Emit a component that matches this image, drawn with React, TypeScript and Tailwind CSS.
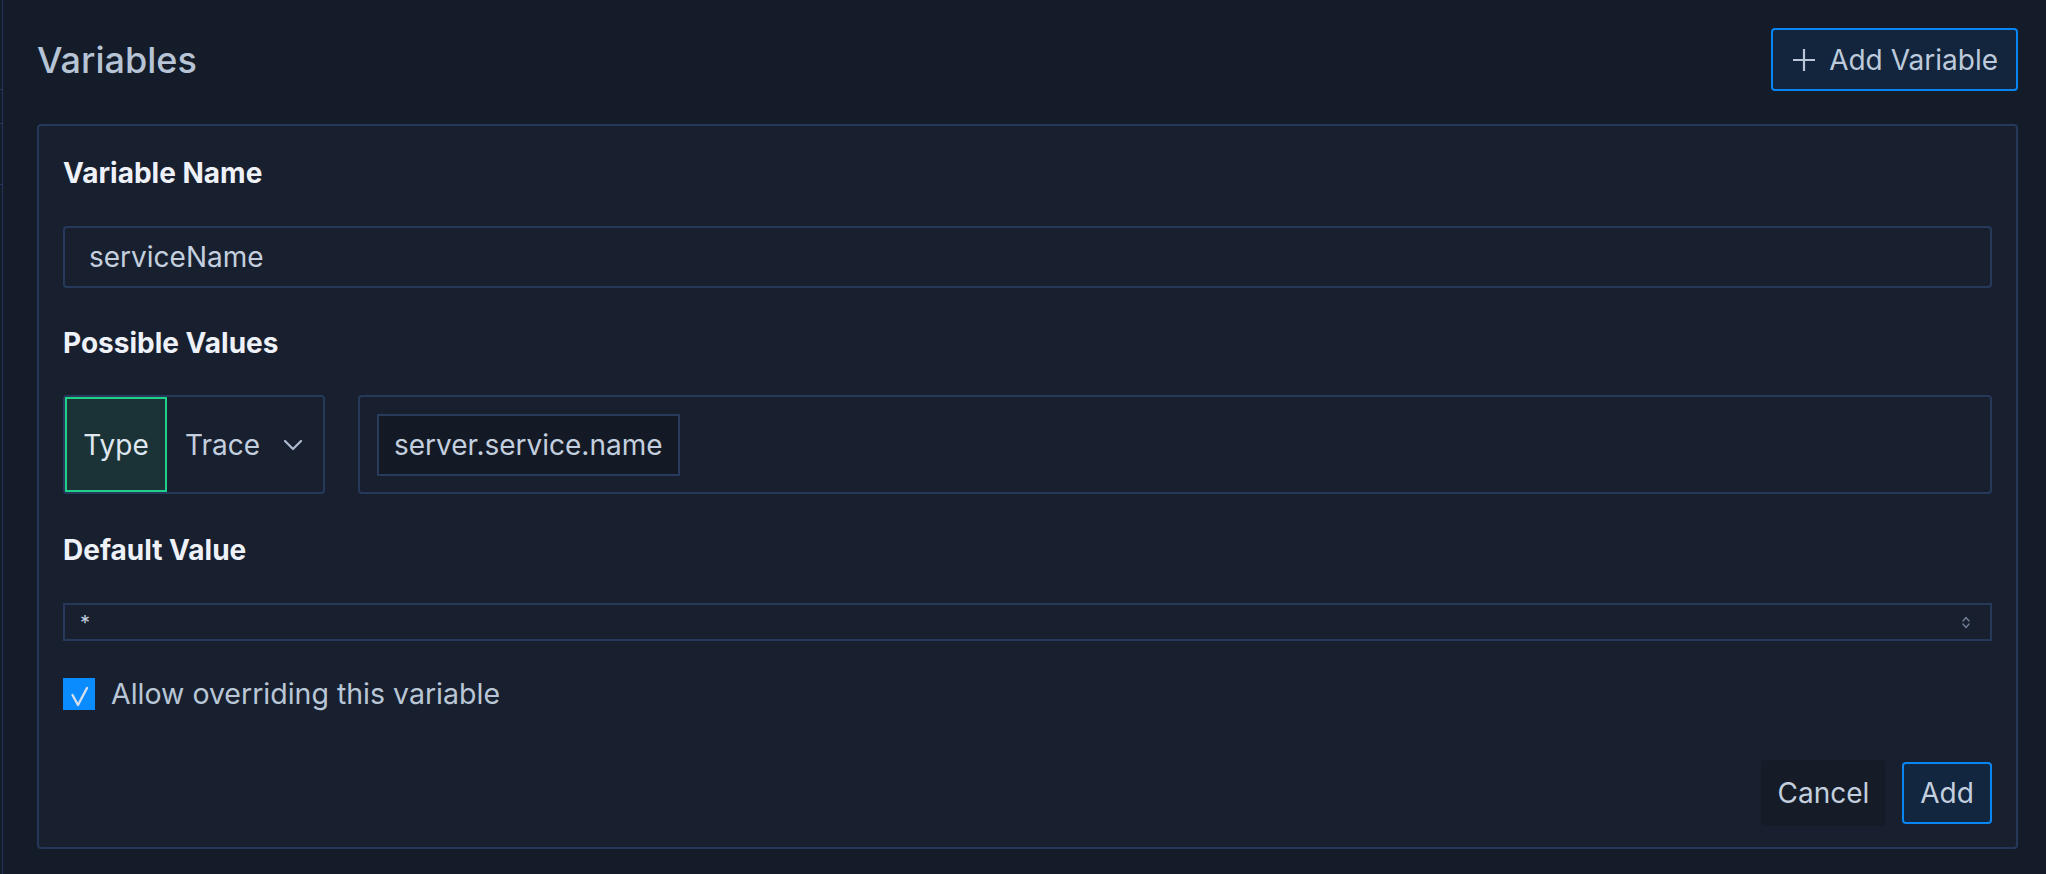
import React from "react"

function PlusIcon() {
  return (
    <svg width="22" height="22" viewBox="0 0 22 22" fill="none" stroke="#b8c6d8" strokeWidth="2.2" strokeLinecap="butt">
      <path d="M11 0v22M0 11h22" />
    </svg>
  )
}

function ChevronDown() {
  return (
    <svg width="20" height="12" viewBox="0 0 20 12" fill="none" stroke="#aebbd0" strokeWidth="2.2" strokeLinecap="round" strokeLinejoin="round">
      <path d="M2 2l8 8 8-8" />
    </svg>
  )
}

function UpDown() {
  return (
    <svg width="8" height="13" viewBox="0 0 8 13" fill="none" stroke="#6d7d95" strokeWidth="1.4" strokeLinecap="round" strokeLinejoin="round">
      <path d="M1 5l3-3.5L7 5M1 8l3 3.5L7 8" />
    </svg>
  )
}

function CheckIcon() {
  return (
    <svg width="32" height="32" viewBox="0 0 32 32" fill="none" stroke="#d2deec" strokeWidth="2.4" strokeLinecap="round" strokeLinejoin="round">
      <path d="M9.5 17l5.5 10 9-17" />
    </svg>
  )
}

export default function App() {
  return (
    <div className="flex h-[874px] w-[2046px] bg-[#151c29] [font-family:Inter,'Liberation_Sans',sans-serif] text-[#c3cfde]">
      {/* sidebar edge */}
      <div className="flex w-[3px] flex-col border-r border-[#23365a]">
        <div className="h-[90px] border-b border-[#23365a]" />
        <div className="h-[34px] border-b border-[#23365a]" />
        <div className="h-[61px] border-b border-[#23365a]" />
      </div>

      <div className="flex flex-1 flex-col pl-[34px] pr-[28px]">
        {/* header */}
        <div className="flex items-center justify-between pt-[28px] pb-[33px]">
          <h1 className="text-[36px] leading-none font-medium text-[#b6c4d6]">Variables</h1>
          <button className="flex h-[63px] items-center gap-[14px] rounded-[4px] border-2 border-[#0a86f2] bg-[#12253d] pl-[20px] pr-[18px] text-[28px] leading-none text-[#bccadb]">
            <PlusIcon />
            <span>Add Variable</span>
          </button>
        </div>

        {/* card */}
        <div className="flex h-[725px] flex-col rounded-[4px] border-2 border-[#25385a] bg-[#182030] px-[24px] pt-[33px]">
          <label className="h-[28px] text-[28px] leading-[28px] font-bold text-[#eef2f8]">Variable Name</label>
          <div className="mt-[39px] flex h-[62px] items-center rounded-[4px] border-2 border-[#27395b] pl-[24px] text-[28px]">
            serviceName
          </div>

          <label className="mt-[41px] h-[28px] text-[28px] leading-[28px] font-bold text-[#eef2f8]">Possible Values</label>
          <div className="mt-[38px] flex h-[99px] gap-[33px]">
            <div className="flex w-[262px] rounded-[4px] border-2 border-[#27395b]">
              <div className="flex w-[102px] items-center justify-center border-2 border-[#1fd08a] bg-[#1b3236] text-[28px] text-[#dfe7f0]">
                Type
              </div>
              <div className="flex flex-1 items-center justify-between pl-[18px] pr-[20px] text-[28px]">
                <span>Trace</span>
                <ChevronDown />
              </div>
            </div>
            <div className="flex flex-1 items-center rounded-[4px] border-2 border-[#27395b] px-[17px]">
              <div className="flex h-[62px] items-center border-2 border-[#283b5d] bg-[#131a26] px-[15px] text-[28px]">
                server.service.name
              </div>
            </div>
          </div>

          <label className="mt-[42px] h-[28px] text-[28px] leading-[28px] font-bold text-[#eef2f8]">Default Value</label>
          <div className="mt-[39px] flex h-[38px] items-center justify-between border-2 border-[#27395b] pl-[15px] pr-[20px] text-[20px]">
            <span className="pt-[2px]">*</span>
            <UpDown />
          </div>

          <div className="mt-[37px] flex items-center gap-[16px]">
            <div className="flex h-[32px] w-[32px] items-center justify-center bg-[#0a8cff]">
              <CheckIcon />
            </div>
            <span className="text-[28.5px] leading-none text-[#b9c6d6]">Allow overriding this variable</span>
          </div>

          <div className="mt-[50px] flex items-center justify-end gap-[16px]">
            <button className="flex h-[66px] w-[125px] items-center justify-center rounded-[4px] bg-[#151c28] text-[28px] text-[#c3cfde]">
              Cancel
            </button>
            <button className="flex h-[62px] w-[90px] items-center justify-center rounded-[4px] border-2 border-[#0a86f2] bg-[#12263f] text-[28px] text-[#c3cfde]">
              Add
            </button>
          </div>
        </div>
      </div>
    </div>
  )
}
